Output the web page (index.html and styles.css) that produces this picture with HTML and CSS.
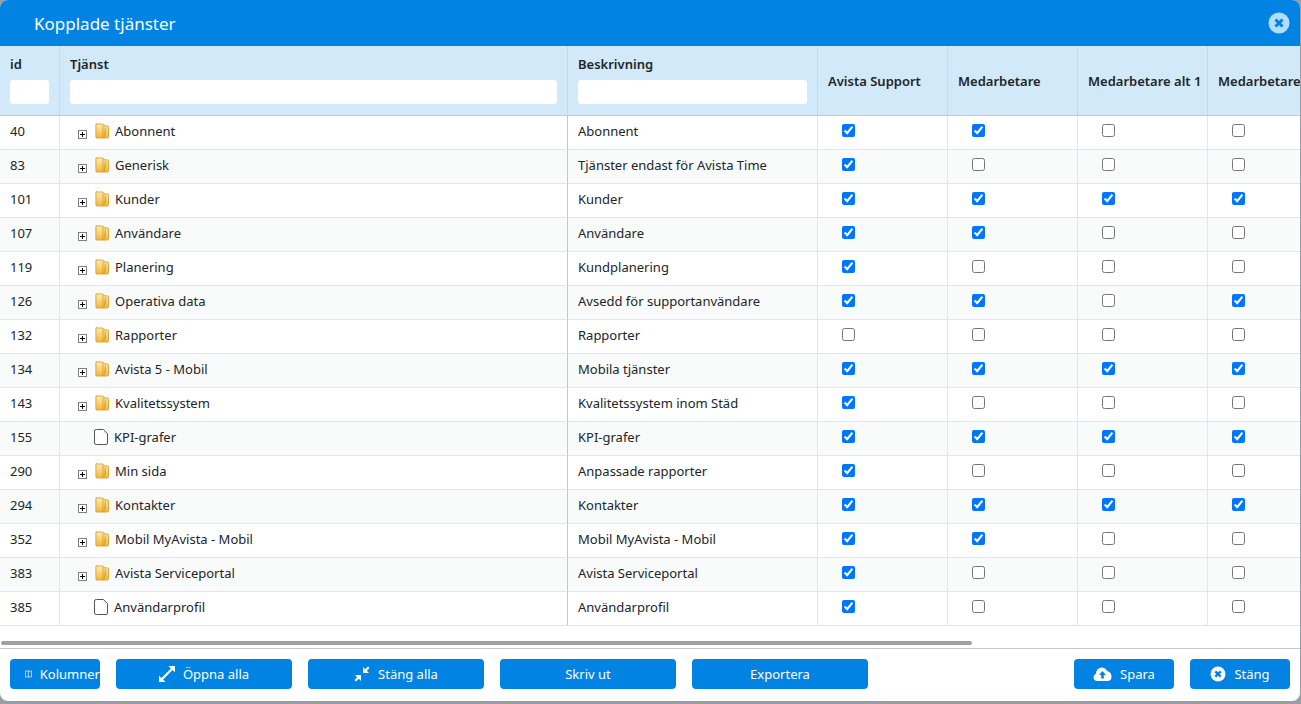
FILE: index.html
```html
<!DOCTYPE html>
<html lang="sv">
<head>
  <meta charset="UTF-8" />
  <title>Kopplade tjänster</title>
  <link rel="stylesheet" href="styles.css">
</head>
<body>
  <svg class="defs" width="0" height="0">
    <defs>
      <linearGradient id="foldergrad" x1="0" y1="0" x2="0" y2="1">
        <stop offset="0" stop-color="#fdeeb8"/>
        <stop offset="1" stop-color="#f0b63c"/>
      </linearGradient>
      <symbol id="folder" viewBox="0 0 15 16">
        <path d="M1.5 .5h6.5l1.5 1v1h3.5q1.5 0 1.500 1.500v10q0 1.500-1.500 1.500h-11q-1 0-1-1v-13.500q0-1 .5-1z" fill="url(#foldergrad)" stroke="#d9a02c"/>
        <path d="M8.500 2v13.500M9 15.500l2-4V4" fill="#e8a92f" stroke="#d9a02c"/>
      </symbol>
      <symbol id="plus" viewBox="0 0 9 9">
        <rect x=".5" y=".5" width="8" height="8" fill="#fff" stroke="#808080"/>
        <path d="M2 4.500h5M4.500 2v5" stroke="#000"/>
      </symbol>
      <symbol id="file" viewBox="0 0 14 16">
        <path d="M2.500 .5h7l4 4v9.500q0 1.500-1.500 1.500h-9.500q-2 0-2-1.500v-12q0-1.500 2-1.500z" fill="#fff" stroke="#555"/>
        <path d="M9.500 1v3.500h3.500z" fill="#e4e4e4"/>
      </symbol>
    </defs>
  </svg>

  <div class="dialog">
    <header class="dialog-head">
      <h1>Kopplade tjänster</h1>
      <button class="head-close" aria-label="Stäng">
        <svg width="22" height="22" viewBox="0 0 22 22"><circle cx="11" cy="11" r="10.500" fill="#b3dcf8"/><path d="M7.500 7.500l7 7M14.500 7.500l-7 7" stroke="#0083e3" stroke-width="3"/></svg>
      </button>
    </header>

    <div class="grid-wrap">
      <table class="grid">
        <colgroup>
          <col class="c-id"><col class="c-name"><col class="c-desc">
          <col class="c-role"><col class="c-role"><col class="c-role"><col class="c-role">
        </colgroup>
        <thead>
          <tr>
            <th class="has-filter">id<input type="text" class="filter"></th>
            <th class="has-filter">Tjänst<input type="text" class="filter"></th>
            <th class="has-filter">Beskrivning<input type="text" class="filter"></th>
            <th>Avista Support</th>
            <th>Medarbetare</th>
            <th>Medarbetare alt 1</th>
            <th>Medarbetare</th>
          </tr>
        </thead>
        <tbody>
          <tr>
            <td>40</td>
            <td class="tree"><svg class="ic-plus"><use href="#plus"/></svg><svg class="ic-node"><use href="#folder"/></svg>Abonnent</td>
            <td>Abonnent</td>
            <td><input type="checkbox" checked></td><td><input type="checkbox" checked></td><td><input type="checkbox"></td><td><input type="checkbox"></td>
          </tr>
          <tr>
            <td>83</td>
            <td class="tree"><svg class="ic-plus"><use href="#plus"/></svg><svg class="ic-node"><use href="#folder"/></svg>Generisk</td>
            <td>Tjänster endast för Avista Time</td>
            <td><input type="checkbox" checked></td><td><input type="checkbox"></td><td><input type="checkbox"></td><td><input type="checkbox"></td>
          </tr>
          <tr>
            <td>101</td>
            <td class="tree"><svg class="ic-plus"><use href="#plus"/></svg><svg class="ic-node"><use href="#folder"/></svg>Kunder</td>
            <td>Kunder</td>
            <td><input type="checkbox" checked></td><td><input type="checkbox" checked></td><td><input type="checkbox" checked></td><td><input type="checkbox" checked></td>
          </tr>
          <tr>
            <td>107</td>
            <td class="tree"><svg class="ic-plus"><use href="#plus"/></svg><svg class="ic-node"><use href="#folder"/></svg>Användare</td>
            <td>Användare</td>
            <td><input type="checkbox" checked></td><td><input type="checkbox" checked></td><td><input type="checkbox"></td><td><input type="checkbox"></td>
          </tr>
          <tr>
            <td>119</td>
            <td class="tree"><svg class="ic-plus"><use href="#plus"/></svg><svg class="ic-node"><use href="#folder"/></svg>Planering</td>
            <td>Kundplanering</td>
            <td><input type="checkbox" checked></td><td><input type="checkbox"></td><td><input type="checkbox"></td><td><input type="checkbox"></td>
          </tr>
          <tr>
            <td>126</td>
            <td class="tree"><svg class="ic-plus"><use href="#plus"/></svg><svg class="ic-node"><use href="#folder"/></svg>Operativa data</td>
            <td>Avsedd för supportanvändare</td>
            <td><input type="checkbox" checked></td><td><input type="checkbox" checked></td><td><input type="checkbox"></td><td><input type="checkbox" checked></td>
          </tr>
          <tr>
            <td>132</td>
            <td class="tree"><svg class="ic-plus"><use href="#plus"/></svg><svg class="ic-node"><use href="#folder"/></svg>Rapporter</td>
            <td>Rapporter</td>
            <td><input type="checkbox"></td><td><input type="checkbox"></td><td><input type="checkbox"></td><td><input type="checkbox"></td>
          </tr>
          <tr>
            <td>134</td>
            <td class="tree"><svg class="ic-plus"><use href="#plus"/></svg><svg class="ic-node"><use href="#folder"/></svg>Avista 5 - Mobil</td>
            <td>Mobila tjänster</td>
            <td><input type="checkbox" checked></td><td><input type="checkbox" checked></td><td><input type="checkbox" checked></td><td><input type="checkbox" checked></td>
          </tr>
          <tr>
            <td>143</td>
            <td class="tree"><svg class="ic-plus"><use href="#plus"/></svg><svg class="ic-node"><use href="#folder"/></svg>Kvalitetssystem</td>
            <td>Kvalitetssystem inom Städ</td>
            <td><input type="checkbox" checked></td><td><input type="checkbox"></td><td><input type="checkbox"></td><td><input type="checkbox"></td>
          </tr>
          <tr>
            <td>155</td>
            <td class="tree leaf"><svg class="ic-node"><use href="#file"/></svg>KPI-grafer</td>
            <td>KPI-grafer</td>
            <td><input type="checkbox" checked></td><td><input type="checkbox" checked></td><td><input type="checkbox" checked></td><td><input type="checkbox" checked></td>
          </tr>
          <tr>
            <td>290</td>
            <td class="tree"><svg class="ic-plus"><use href="#plus"/></svg><svg class="ic-node"><use href="#folder"/></svg>Min sida</td>
            <td>Anpassade rapporter</td>
            <td><input type="checkbox" checked></td><td><input type="checkbox"></td><td><input type="checkbox"></td><td><input type="checkbox"></td>
          </tr>
          <tr>
            <td>294</td>
            <td class="tree"><svg class="ic-plus"><use href="#plus"/></svg><svg class="ic-node"><use href="#folder"/></svg>Kontakter</td>
            <td>Kontakter</td>
            <td><input type="checkbox" checked></td><td><input type="checkbox" checked></td><td><input type="checkbox" checked></td><td><input type="checkbox" checked></td>
          </tr>
          <tr>
            <td>352</td>
            <td class="tree"><svg class="ic-plus"><use href="#plus"/></svg><svg class="ic-node"><use href="#folder"/></svg>Mobil MyAvista - Mobil</td>
            <td>Mobil MyAvista - Mobil</td>
            <td><input type="checkbox" checked></td><td><input type="checkbox" checked></td><td><input type="checkbox"></td><td><input type="checkbox"></td>
          </tr>
          <tr>
            <td>383</td>
            <td class="tree"><svg class="ic-plus"><use href="#plus"/></svg><svg class="ic-node"><use href="#folder"/></svg>Avista Serviceportal</td>
            <td>Avista Serviceportal</td>
            <td><input type="checkbox" checked></td><td><input type="checkbox"></td><td><input type="checkbox"></td><td><input type="checkbox"></td>
          </tr>
          <tr>
            <td>385</td>
            <td class="tree leaf"><svg class="ic-node"><use href="#file"/></svg>Användarprofil</td>
            <td>Användarprofil</td>
            <td><input type="checkbox" checked></td><td><input type="checkbox"></td><td><input type="checkbox"></td><td><input type="checkbox"></td>
          </tr>
        </tbody>
      </table>
    </div>

    <div class="hscroll"><div class="hscroll-thumb"></div></div>

    <footer class="dialog-foot">
      <button class="btn btn-cols">
        <svg class="btn-ic" width="16" height="16" viewBox="0 0 16 16"><path d="M1 1h14v14H1zM8 1v14" fill="none" stroke="#fff" stroke-width="1.600"/></svg><span>Kolumner</span>
      </button>
      <button class="btn btn-wide">
        <svg class="btn-ic" width="16" height="16" viewBox="0 0 16 16"><path d="M9.500 0H16v6.500L13.600 4.100 4.100 13.600 6.500 16H0V9.500l2.400 2.400 9.500-9.500z" fill="#fff"/></svg><span>Öppna alla</span>
      </button>
      <button class="btn btn-wide">
        <svg class="btn-ic" width="16" height="16" viewBox="0 0 16 16"><path d="M9 1v6h6l-2.200-2.200L15.500 2 14 .5l-2.800 2.700zM7 15V9H1l2.200 2.200L.5 14 2 15.500l2.800-2.700z" fill="#fff"/></svg><span>Stäng alla</span>
      </button>
      <button class="btn btn-wide">Skriv ut</button>
      <button class="btn btn-wide">Exportera</button>
      <div class="foot-right">
        <button class="btn btn-save">
          <svg class="btn-ic" width="19" height="16" viewBox="0 0 19 16"><path d="M4.500 15Q.5 15 .5 11.300 .5 8.600 3 7.700 3 2.500 8.500 1.500 12.500 1.500 14 5 18.500 6 18.500 10.500 18.500 15 14.500 15z" fill="#fff"/><path d="M9.500 5l3.500 4h-2.200v3.500H8.200V9H6z" fill="#0083e3"/></svg><span>Spara</span>
        </button>
        <button class="btn btn-save">
          <svg class="btn-ic" width="16" height="16" viewBox="0 0 16 16"><circle cx="8" cy="8" r="7.500" fill="#fff"/><path d="M5.300 5.300l5.400 5.400M10.700 5.300l-5.400 5.400" stroke="#0083e3" stroke-width="2.400"/></svg><span>Stäng</span>
        </button>
      </div>
    </footer>
  </div>
</body>
</html>
```

FILE: styles.css
```css
html, body {
  height: 100%;
}

body {
  margin: 0;
  background: #9a9da3;
  font-family: "Noto Sans", "Open Sans", sans-serif;
  font-size: 13px;
  color: #212529;
  overflow: hidden;
}

.defs {
  display: block;
  height: 0;
}

.dialog {
  display: flex;
  flex-direction: column;
  width: 1300px;
  height: 701px;
  background: #fff;
  border-radius: 8px;
  overflow: hidden;
}

.dialog-head {
  display: flex;
  align-items: center;
  justify-content: space-between;
  height: 46px;
  flex: none;
  padding: 0 10px 0 34px;
  background: #0083e3;
  color: #fff;
}

.dialog-head h1 {
  margin: 0;
  font-size: 17px;
  font-weight: 400;
}

.head-close {
  display: flex;
  padding: 0;
  border: none;
  background: transparent;
}

.grid-wrap {
  height: 595px;
  flex: none;
  overflow: hidden;
}

.grid {
  table-layout: fixed;
  border-collapse: separate;
  border-spacing: 0;
  width: 1338px;
}

.c-id { width: 60px; }
.c-name { width: 508px; }
.c-desc { width: 250px; }
.c-role { width: 130px; }

.grid th {
  height: 70px;
  box-sizing: border-box;
  padding: 0 10px;
  background: #d2e9f9;
  border-right: 1px solid #c8d8e4;
  border-bottom: 1px solid #c4c8ce;
  font-weight: 600;
  text-align: left;
  white-space: nowrap;
}

.grid th.has-filter {
  padding-top: 2px;
  vertical-align: top;
  line-height: 32px;
}

.filter {
  display: block;
  box-sizing: border-box;
  width: 100%;
  height: 24px;
  padding: 0 4px;
  border: none;
  border-radius: 3px;
  background: #fff;
}

.grid td {
  height: 34px;
  box-sizing: border-box;
  padding: 0 10px 4px;
  border-right: 1px solid #e2e5e9;
  border-bottom: 1px solid #e2e5e9;
  white-space: nowrap;
}

.grid td:nth-child(2) {
  border-right: 1px solid #c4c8ce;
}

.grid tbody tr:nth-child(even) td {
  background: #f9fbfa;
}

.grid td input {
  display: block;
  margin: 0 0 0 14px;
}

.tree {
  padding-left: 18px;
}

.grid td.tree {
  padding-left: 18px;
}

.ic-plus {
  width: 9px;
  height: 9px;
  margin-right: 8px;
  vertical-align: -3px;
}

.ic-node {
  width: 14px;
  height: 16px;
  margin-right: 6px;
  vertical-align: -3px;
}

.grid td.leaf {
  padding-left: 34px;
}

.hscroll {
  height: 7px;
  flex: none;
  padding-top: 0;
}

.hscroll-thumb {
  width: 971px;
  height: 4px;
  margin-left: 1px;
  border-radius: 2px;
  background: #a0a0a0;
}

.dialog-foot {
  display: flex;
  flex: 1;
  align-items: flex-start;
  gap: 16px;
  padding: 10px 10px 0;
  border-top: 1px solid #c4c8ce;
}

.foot-right {
  display: flex;
  gap: 16px;
  margin-left: auto;
}

.btn {
  display: flex;
  align-items: center;
  justify-content: center;
  gap: 8px;
  height: 30px;
  padding: 0;
  border: none;
  border-radius: 4px;
  background: #0083e3;
  color: #fff;
  font: inherit;
  overflow: hidden;
  white-space: nowrap;
}

.btn-cols {
  width: 90px;
  justify-content: flex-start;
  padding-left: 15px;
}

.btn-wide {
  width: 176px;
}

.btn-save {
  width: 100px;
}
```
